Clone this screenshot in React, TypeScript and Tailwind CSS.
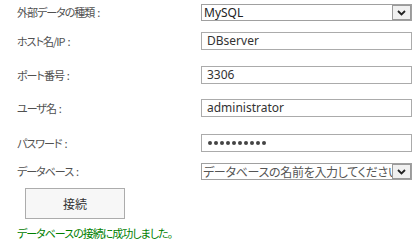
import React from "react";

const jp = "font-['Noto_Sans_CJK_JP',sans-serif] [font-feature-settings:'palt']";
const lat = "font-['Noto_Sans','Noto_Sans_CJK_JP',sans-serif]";

function Chevron() {
  return (
    <div className="w-[19px] h-[15px] border border-[#9a9a9a] bg-[#f0f0f0] flex items-center justify-center shrink-0">
      <svg width="9" height="6" viewBox="0 0 9 6">
        <path d="M1 1 L4.5 4.5 L8 1" fill="none" stroke="#222" strokeWidth="1.8" />
      </svg>
    </div>
  );
}

function Label({ children }: { children: React.ReactNode }) {
  return (
    <div className={`w-[184px] shrink-0 text-[11px] tracking-[-1px] text-[#505050] whitespace-pre ${jp}`}>{children}</div>
  );
}

function TextBox({ children }: { children: React.ReactNode }) {
  return (
    <div className="w-[211px] h-[18px] border border-[#ababab] bg-white flex items-center pl-[5px] overflow-hidden">
      {children}
    </div>
  );
}

export default function App() {
  return (
    <div className="w-[418px] h-[245px] bg-white pl-[17px] pt-[4px] flex flex-col">
      <div className="flex items-center h-[17px]">
        <Label>外部データの種類  :</Label>
        <div className="w-[211px] h-[17px] border border-[#a0a0a0] bg-white flex justify-between overflow-hidden">
          <span className={`text-[12px] text-[#222] pl-[2px] leading-[15px] ${lat}`}>MySQL</span>
          <Chevron />
        </div>
      </div>
      <div className="flex items-center h-[18px] mt-[11px]">
        <Label>ホスト名/IP  :</Label>
        <TextBox>
          <span className={`text-[12px] text-[#333] ${lat}`}>DBserver</span>
        </TextBox>
      </div>
      <div className="flex items-center h-[18px] mt-[16px]">
        <Label>ポート番号  :</Label>
        <TextBox>
          <span className={`text-[12px] text-[#333] ${lat}`}>3306</span>
        </TextBox>
      </div>
      <div className="flex items-center h-[18px] mt-[15px]">
        <Label>ユーザ名  :</Label>
        <TextBox>
          <span className={`text-[12px] text-[#333] ${lat}`}>administrator</span>
        </TextBox>
      </div>
      <div className="flex items-center h-[18px] mt-[17px]">
        <Label>パスワード  :</Label>
        <TextBox>
          <div className="flex gap-[2px] pl-[1px]">
            {Array.from({ length: 10 }).map((_, i) => (
              <span key={i} className="w-[4px] h-[4px] rounded-full bg-[#444]" />
            ))}
          </div>
        </TextBox>
      </div>
      <div className="flex items-center h-[17px] mt-[11px]">
        <Label>データベース  :</Label>
        <div className="w-[211px] h-[17px] border border-[#a0a0a0] bg-white flex overflow-hidden">
          <span className={`flex-1 text-[12px] tracking-[-0.3px] text-[#555] pl-[1px] leading-[15px] whitespace-nowrap overflow-hidden ${jp}`}>
            データベースの名前を入力してください
          </span>
          <Chevron />
        </div>
      </div>
      <div className="mt-[8px] ml-[8px] w-[100px] h-[31px] border border-[#acacac] bg-[#f7f7f7] flex items-center justify-center">
        <span className={`text-[12px] text-[#333] ${jp}`}>接続</span>
      </div>
      <div className={`mt-[7px] text-[11px] tracking-[-1px] text-[#008000] leading-[14px] ${jp}`}>
        データベースの接続に成功しました。
      </div>
    </div>
  );
}
